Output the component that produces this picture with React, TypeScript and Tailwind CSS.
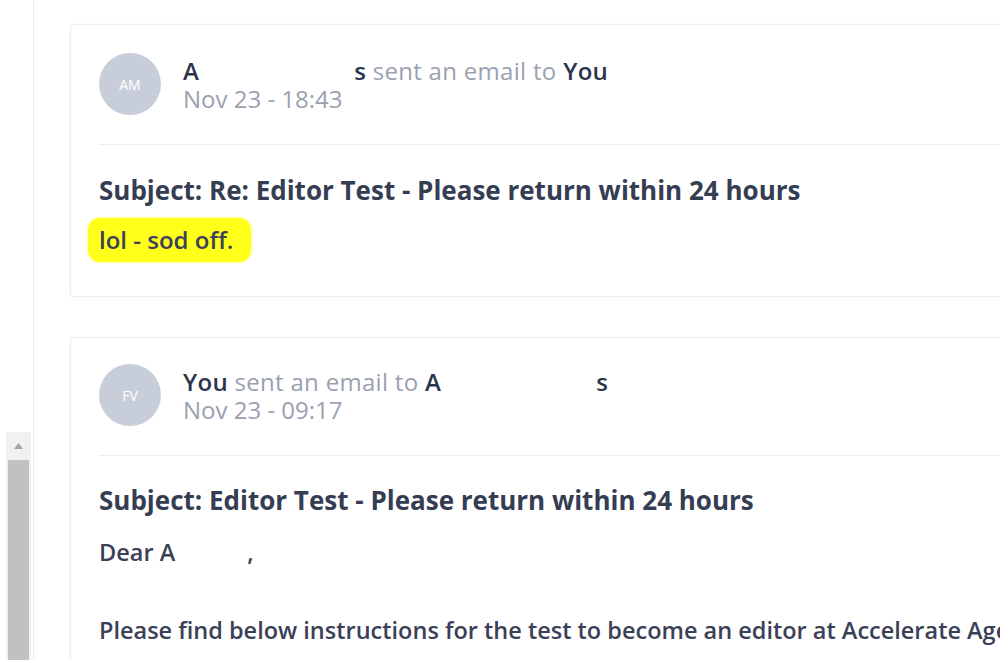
import React from "react";

const font = { fontFamily: "'Open Sans', 'Noto Sans', sans-serif" };

function Avatar({ initials }: { initials: string }) {
  return (
    <div className="w-[62px] h-[62px] rounded-full bg-[#c8ced9] flex items-center justify-center shrink-0">
      <span className="text-white text-[14px] font-normal">{initials}</span>
    </div>
  );
}

function Gap({ w }: { w: number }) {
  return <span className="inline-block" style={{ width: w }} />;
}

export default function App() {
  return (
    <div className="w-[1000px] h-[660px] overflow-hidden bg-white flex" style={font}>
      {/* left rail with scrollbar */}
      <div className="w-[34px] shrink-0 border-r border-[#ededed] flex flex-col pt-[432px] pl-[6px] pr-[2px]">
        <div className="w-[25px] h-[28px] bg-[#f1f1f1] flex items-center justify-center">
          <svg width="9" height="6" viewBox="0 0 9 6">
            <path d="M0 6 L4.5 0 L9 6 Z" fill="#a3a3a3" />
          </svg>
        </div>
        <div className="w-[25px] flex-1 bg-[#f1f1f1] px-[2px]">
          <div className="h-full bg-[#c1c1c1]" />
        </div>
      </div>

      {/* main */}
      <div className="flex-1 min-w-0 pl-[36px] pt-[24px] flex flex-col gap-[40px] text-[#2f3850]">
        {/* card 1 */}
        <div className="w-[1000px] h-[273px] shrink-0 border border-[#eceef1] rounded-[3px] shadow-[0_0_3px_rgba(0,0,0,0.04)] px-[28px] pt-[28px]">
          <div className="flex items-center gap-[22px] pb-[29px] border-b border-[#eceef1]">
            <Avatar initials="AM" />
            <div className="flex flex-col text-[24px] leading-[28px] mt-[2px] whitespace-nowrap tracking-[0.3px]">
              <div>
                <span className="font-semibold text-[#2b344b]">A</span>
                <Gap w={155} />
                <span className="font-semibold text-[#2b344b]">s</span>
                <span className="text-[#9aa1af]"> sent an email to </span>
                <span className="font-semibold text-[#2b344b]">You</span>
              </div>
              <div className="text-[#9aa1af] tracking-normal">Nov 23 - 18:43</div>
            </div>
          </div>
          <div className="pt-[31px] text-[26px] leading-[28px] font-bold text-[#353d52] whitespace-nowrap">
            Subject: Re: Editor Test - Please return within 24 hours
          </div>
          <div className="mt-[14px] -ml-[11px]">
            <span className="inline-block bg-[#ffff1a] rounded-[12px] shadow-[0_0_3px_#ffff40] pl-[11px] pr-[18px] py-[8px] text-[24px] leading-[28px] font-semibold text-[#3a4157]">
              lol - sod off.
            </span>
          </div>
        </div>

        {/* card 2 */}
        <div className="w-[1000px] h-[400px] shrink-0 border border-[#eceef1] rounded-[3px] shadow-[0_0_3px_rgba(0,0,0,0.04)] px-[28px] pt-[26px]">
          <div className="flex items-center gap-[22px] pb-[29px] border-b border-[#eceef1]">
            <Avatar initials="FV" />
            <div className="flex flex-col text-[24px] leading-[28px] mt-[2px] whitespace-nowrap tracking-[0.3px]">
              <div>
                <span className="font-semibold text-[#2b344b]">You</span>
                <span className="text-[#9aa1af]"> sent an email to </span>
                <span className="font-semibold text-[#2b344b]">A</span>
                <Gap w={155} />
                <span className="font-semibold text-[#2b344b]">s</span>
              </div>
              <div className="text-[#9aa1af] tracking-normal">Nov 23 - 09:17</div>
            </div>
          </div>
          <div className="pt-[30px] text-[26px] leading-[28px] font-bold text-[#353d52] whitespace-nowrap">
            Subject: Editor Test - Please return within 24 hours
          </div>
          <div className="mt-[24px] text-[23.5px] leading-[28px] font-semibold text-[#3a4157] whitespace-nowrap">
            <p>
              Dear A<Gap w={72} />,
            </p>
            <p className="mt-[50px]">
              Please find below instructions for the test to become an editor at Accelerate Agency.
            </p>
          </div>
        </div>
      </div>
    </div>
  );
}
